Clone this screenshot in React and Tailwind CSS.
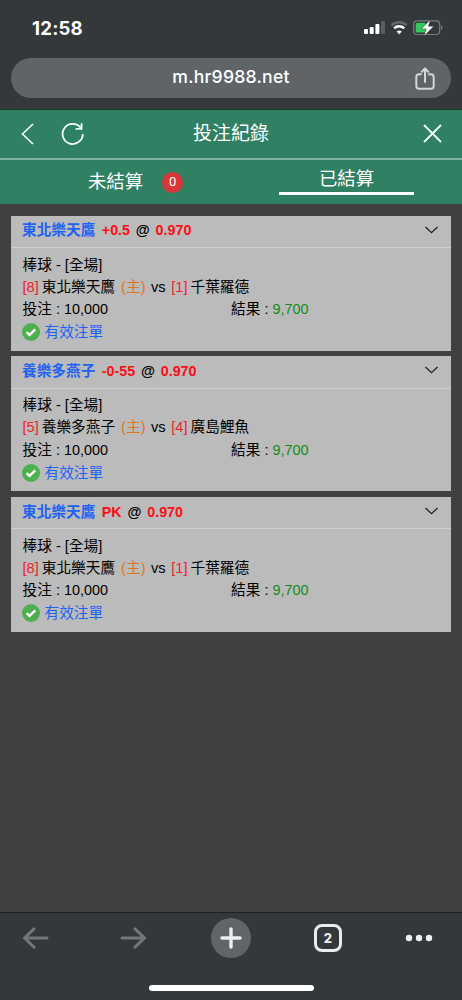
import React from "react";

const bets = [
  { team: "東北樂天鷹", line: "+0.5", homeNo: "[8]", home: "東北樂天鷹", awayNo: "[1]", away: "千葉羅德" },
  { team: "養樂多燕子", line: "-0-55", homeNo: "[5]", home: "養樂多燕子", awayNo: "[4]", away: "廣島鯉魚" },
  { team: "東北樂天鷹", line: "PK", homeNo: "[8]", home: "東北樂天鷹", awayNo: "[1]", away: "千葉羅德" },
];

function StatusBar() {
  return (
    <div className="flex h-[58px] items-center justify-between pl-8 pr-[19px] font-['Inter',sans-serif]">
      <span className="-mt-0.5 text-[18.6px] font-bold leading-none tracking-[0.2px] text-white">12:58</span>
      <svg className="-mt-0.5" width="79" height="18" viewBox="0 0 79 18" fill="none">
        <rect x="0" y="10" width="4" height="5" rx="1" fill="#fff" />
        <rect x="5.7" y="8" width="4" height="7" rx="1" fill="#fff" />
        <rect x="11.4" y="5" width="4" height="10" rx="1" fill="#fff" />
        <rect x="17" y="2" width="4" height="13" rx="1" fill="#5b5e60" />
        <path d="M27.7 6.2a11 11 0 0 1 15 0" stroke="#65686a" strokeWidth="2.6" />
        <path d="M30.2 9.4a7 7 0 0 1 10 0" stroke="#fff" strokeWidth="2.6" />
        <path d="M32.6 12.4a4.2 4.2 0 0 1 5.2 0L35.2 15.2Z" fill="#fff" />
        <rect x="49.7" y="1.9" width="26" height="13.6" rx="3.5" stroke="#797c7e" strokeWidth="1.2" />
        <path d="M77 6.5v4.5q1.6-.7 1.6-2.2T77 6.5Z" fill="#797c7e" />
        <rect x="51.7" y="3.8" width="10" height="9.8" rx="1.7" fill="#34c759" />
        <path d="M66.2.8 57.2 9.9h5L60 17l9.8-9.8h-5.3Z" fill="#fff" stroke="#35383a" strokeWidth=".5" />
      </svg>
    </div>
  );
}

function AddressBar() {
  return (
    <div className="mx-[11px] grid h-10 grid-cols-[1fr_auto_1fr] items-center rounded-full bg-[#5f6467]">
      <span />
      <span className="-mt-0.5 font-['Inter',sans-serif] text-[17.6px] font-medium leading-none tracking-[0.24px] text-white">m.hr9988.net</span>
      <svg className="mr-4 mt-0.5 justify-self-end" width="20" height="24" viewBox="0 0 20 24" fill="none" stroke="#d3d5d7" strokeWidth="2" strokeLinecap="round" strokeLinejoin="round">
        <path d="M6 7.2H4Q1.3 7.2 1.3 10v9q0 2.7 2.7 2.7h12q2.7 0 2.7-2.7v-9q0-2.8-2.7-2.8h-2M10 15V1.6M6.8 4.8 10 1.5l3.2 3.3" />
      </svg>
    </div>
  );
}

function PageHeader() {
  return (
    <header className="bg-[#308064] text-white">
      <div className="grid h-[49px] grid-cols-[1fr_auto_1fr] items-center border-t border-[#18392e] pb-px">
        <div className="flex items-center pl-[21px]">
          <svg width="13" height="22" viewBox="0 0 13 22" fill="none" stroke="#edfff9" strokeWidth="1.7">
            <path d="m12 1-10.5 10L12 21" />
          </svg>
          <svg className="ml-[27px]" width="24" height="24" viewBox="0 0 24 24" fill="none" stroke="#edfff9" strokeWidth="1.8">
            <path d="M21.8 12A10.1 10.1 0 1 1 19.6 5.6M20.6 1.2v5.6h-6" />
          </svg>
        </div>
        <h1 className="-mt-px text-[19px] font-normal leading-none">投注紀錄</h1>
        <svg className="mr-5 justify-self-end" width="19" height="19" viewBox="0 0 19 19" fill="none" stroke="#f2fffb" strokeWidth="1.8">
          <path d="m1 1 17 17M18 1 1 18" />
        </svg>
      </div>
      <div className="h-0.5 bg-[#83b3a2]" />
      <nav className="grid h-[44px] grid-cols-2 text-[18.4px]">
        <div className="flex items-center justify-center gap-[19px] pl-10">
          <span className="leading-none">未結算</span>
          <span className="flex size-[21px] items-center justify-center rounded-full bg-[#d73736] font-['Roboto',sans-serif] text-[13px]">0</span>
        </div>
        <div className="flex flex-col items-center">
          <span className="flex h-[32px] items-center pt-1.5 leading-none">已結算</span>
          <span className="h-[3px] w-[135px] bg-white" />
        </div>
      </nav>
    </header>
  );
}

function BetCard({ bet }) {
  return (
    <article className="h-[135px] bg-[#bbbbbb] text-[14.67px] text-black">
      <div className="flex h-[32.5px] items-center justify-between border-b border-[#d0d0d0] pl-[11px] pr-[13px]">
        <div className="-mt-px flex text-[14.67px] font-bold leading-none">
          <span className="text-[#1d62f3]">{bet.team}</span>
          <span className="ml-[6.5px] text-[14.3px] text-[#fa0d16]">{bet.line}</span>
          <span className="ml-[5.8px] text-[14.3px]">@</span>
          <span className="ml-[5.8px] text-[14.3px] text-[#fa0d16]">0.970</span>
        </div>
        <svg className="-mt-[3px]" width="13" height="8" viewBox="0 0 13 8" fill="none" stroke="#222" strokeWidth="1.3">
          <path d="m.5 1 6 5.7L12.5 1" />
        </svg>
      </div>
      <div className="pl-[11.5px] pt-[5.6px] leading-[22.3px]">
        <div className="flex">棒球 - [全場]</div>
        <div className="flex">
          <span className="text-[#f2222c]">{bet.homeNo}</span>
          <span className="ml-[3px]">{bet.home}</span>
          <span className="ml-[6px] text-[#df751f]">(主)</span>
          <span className="ml-[5.5px]">vs</span>
          <span className="ml-[5.5px] text-[#f2222c]">{bet.awayNo}</span>
          <span className="ml-[3px]">{bet.away}</span>
        </div>
        <div className="grid grid-cols-[208.5px_1fr]">
          <div>投注 : <span className="text-[14.4px]">10,000</span></div>
          <div>結果 : <span className="text-[14.4px] text-[#148b19]">9,700</span></div>
        </div>
        <div className="-ml-[0.5px] flex h-[23.4px] items-center gap-[4.5px]">
          <svg width="18" height="18" viewBox="0 0 18 18">
            <circle cx="9" cy="9" r="9" fill="#4caf50" />
            <path d="m4.6 9.2 2.9 2.7 5.8-5.6" fill="none" stroke="#fff" strokeWidth="2.4" />
          </svg>
          <span className="text-[#1d62f3]">有效注單</span>
        </div>
      </div>
    </article>
  );
}

function BottomBar() {
  return (
    <footer className="flex h-[88px] flex-col items-center border-t border-[#1c1e1f] bg-[#35383b]">
      <div className="mt-[4px] flex h-[42px] w-full items-center pl-[22px] pr-[29px]">
        <svg width="27" height="22" viewBox="0 0 27 22" fill="none" stroke="#747678" strokeWidth="3" strokeLinecap="round" strokeLinejoin="round">
          <path d="M25 11H2.5M12 1.8 2.5 11l9.5 9.2" />
        </svg>
        <svg className="ml-[71px]" width="27" height="22" viewBox="0 0 27 22" fill="none" stroke="#747678" strokeWidth="3" strokeLinecap="round" strokeLinejoin="round">
          <path d="M2 11h22.5M15 1.8l9.5 9.2-9.5 9.2" />
        </svg>
        <div className="ml-[64px] flex size-10 items-center justify-center rounded-full bg-[#606568]">
          <svg width="22" height="22" viewBox="0 0 22 22" stroke="#eceef0" strokeWidth="3.4" strokeLinecap="round">
            <path d="M11 2v18M2 11h18" />
          </svg>
        </div>
        <div className="ml-[63px] flex size-[28px] items-center justify-center rounded-[8px] border-[3px] border-[#e9ebed] font-['Inter',sans-serif] text-[13px] font-extrabold leading-none text-[#e9ebed]">2</div>
        <svg className="ml-auto" width="28" height="8" viewBox="0 0 28 8" fill="#eceef0">
          <circle cx="4" cy="4" r="3.2" />
          <circle cx="14" cy="4" r="3.2" />
          <circle cx="24" cy="4" r="3.2" />
        </svg>
      </div>
      <div className="mt-[26px] h-[6px] w-[165px] rounded-full bg-white" />
    </footer>
  );
}

export default function App() {
  return (
    <div className="flex h-[1000px] w-[462px] flex-col overflow-hidden bg-[#404040] font-['Liberation_Sans','Noto_Sans_CJK_TC',sans-serif]">
      <div className="h-[109px] shrink-0 bg-[#35383b]">
        <StatusBar />
        <AddressBar />
      </div>
      <PageHeader />
      <main className="flex flex-1 flex-col gap-[5.6px] px-[11px] pt-[11.5px]">
        {bets.map((bet, i) => (
          <BetCard key={i} bet={bet} />
        ))}
      </main>
      <BottomBar />
    </div>
  );
}
